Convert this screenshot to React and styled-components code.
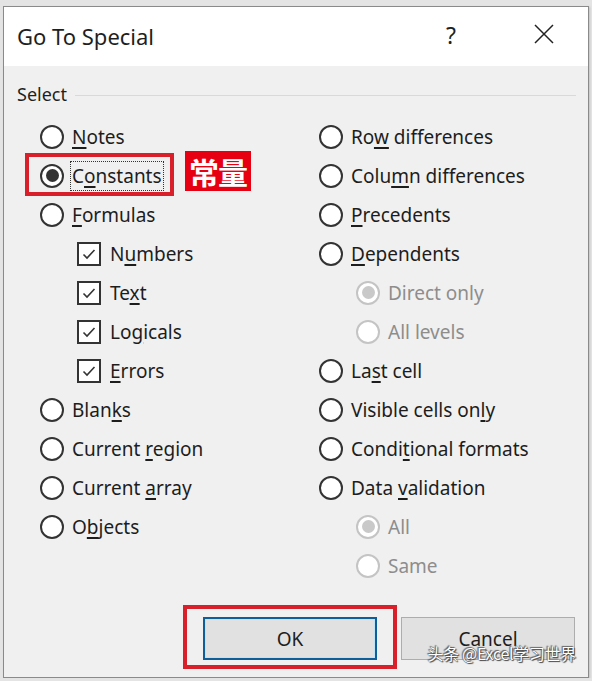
import React from 'react';
import styled, { createGlobalStyle } from 'styled-components';

const GlobalStyle = createGlobalStyle`
  html, body {
    margin: 0;
    padding: 0;
    background: #e4e4e4;
  }
  body {
    font-family: "Noto Sans", "Open Sans", sans-serif;
  }
`;

const Dialog = styled.div`
  position: relative;
  box-sizing: border-box;
  width: 586px;
  height: 672px;
  margin: 6px 0 0 3px;
  border: 1px solid #8a8a8a;
  background: #f0f0f0;
  display: flex;
  flex-direction: column;
  box-shadow: 1px 1px 2px rgba(0, 0, 0, 0.15);
`;

const TitleBar = styled.div`
  height: 59px;
  background: #fff;
  display: flex;
  align-items: center;
  padding: 0 0 0 13px;
  color: #1f1f1f;
`;

const Title = styled.div`
  flex: 1;
  font-size: 22px;
  padding-bottom: 2px;
`;

const Help = styled.div`
  font-size: 23px;
  width: 20px;
  margin-right: 68px;
  padding-bottom: 4px;
`;

const Close = styled.div`
  width: 20px;
  height: 20px;
  margin-right: 34px;
  margin-bottom: 6px;
  display: flex;
`;

const Body = styled.div`
  flex: 1;
  display: flex;
  flex-direction: column;
  padding: 15px 12px 0 13px;
`;

const GroupHead = styled.div`
  display: flex;
  align-items: center;
  gap: 8px;
  height: 26px;
  font-size: 18px;
  color: #1f1f1f;
  &::after {
    content: '';
    flex: 1;
    height: 1px;
    background: #d9d9d9;
    margin-top: 2px;
  }
`;

const Columns = styled.div`
  display: grid;
  grid-template-columns: 279px 1fr;
  padding: 10px 0 0 23px;
`;

const Column = styled.div`
  display: flex;
  flex-direction: column;
`;

const Row = styled.div`
  position: relative;
  height: 39px;
  display: flex;
  align-items: center;
  padding-left: ${(p) => (p.$indent ? '37px' : '0')};
  font-size: 19px;
  color: ${(p) => (p.$disabled ? '#8d8d8d' : '#1d1d1d')};
`;

const RadioCircle = styled.span`
  box-sizing: border-box;
  width: 24px;
  height: 24px;
  border-radius: 50%;
  border: 2px solid ${(p) => (p.$disabled ? '#c4c4c4' : '#333')};
  background: #fff;
  margin-right: 6px;
  display: flex;
  align-items: center;
  justify-content: center;
  flex-shrink: 0;
  &::after {
    content: '';
    display: ${(p) => (p.$checked ? 'block' : 'none')};
    width: 13px;
    height: 13px;
    border-radius: 50%;
    background: ${(p) => (p.$disabled ? '#c9c9c9' : '#333')};
  }
`;

const CheckBox = styled.span`
  box-sizing: border-box;
  width: 24px;
  height: 24px;
  border: 2px solid #333;
  background: #fff;
  margin-right: 7px;
  display: flex;
  align-items: center;
  justify-content: center;
  flex-shrink: 0;
`;

const Label = styled.span`
  position: relative;
  padding: 0 1px;
  border: 1px ${(p) => (p.$focus ? 'dotted #333' : 'solid transparent')};
  line-height: 28px;
`;

const Key = styled.span`
  text-decoration: underline;
  text-underline-offset: 3px;
  text-decoration-thickness: 1.5px;
`;

const Highlight = styled.div`
  position: absolute;
  left: -15px;
  top: -3px;
  width: 149px;
  height: 43px;
  box-sizing: border-box;
  border: 4px solid #d9202a;
  pointer-events: none;
`;

const Badge = styled.div`
  position: absolute;
  left: 145px;
  top: -5px;
  width: 66px;
  height: 40px;
  background: #e60012;
  color: #fff;
  font-family: "Noto Sans CJK SC", sans-serif;
  font-weight: 700;
  font-size: 30px;
  line-height: 40px;
  text-align: center;
  letter-spacing: -1px;
`;

const Buttons = styled.div`
  margin-top: auto;
  display: flex;
  justify-content: flex-end;
  align-items: flex-start;
  gap: 4px;
  padding: 0 1px 8px 0;
`;

const OkFrame = styled.div`
  border: 4px solid #d9202a;
  padding: 8px 16px 5px;
`;

const Button = styled.button`
  box-sizing: border-box;
  width: 174px;
  height: 43px;
  font-family: "Noto Sans", sans-serif;
  font-size: 19px;
  color: #1d1d1d;
  background: #e1e1e1;
  border: ${(p) => (p.$primary ? '2px solid #0f5e9c' : '1px solid #adadad')};
  box-shadow: ${(p) => (p.$primary ? 'inset 0 0 0 1px #bfe3f7' : 'none')};
  margin-top: ${(p) => (p.$primary ? '0' : '12px')};
  padding: 0;
`;

const Watermark = styled.div`
  position: absolute;
  right: 12px;
  bottom: 12px;
  font-family: "Noto Sans CJK SC", sans-serif;
  font-size: 16px;
  color: #fff;
  text-shadow: 0 0 1px #333, 1px 1px 1px #444, -1px -1px 1px #666;
  letter-spacing: -0.3px;
`;

const CloseIcon = () => (
  <svg width="20" height="20" viewBox="0 0 20 20">
    <path d="M1 1 L19 19 M19 1 L1 19" stroke="#222" strokeWidth="1.5" fill="none" />
  </svg>
);

const CheckMark = () => (
  <svg width="16" height="16" viewBox="0 0 16 16">
    <path d="M2.5 8.5 L6 12 L13.5 4" stroke="#333" strokeWidth="1.6" fill="none" />
  </svg>
);

// label text with the access-key letter underlined
const Text = ({ label, k }) => {
  if (k == null) return label;
  return (
    <>
      {label.slice(0, k)}
      <Key>{label[k]}</Key>
      {label.slice(k + 1)}
    </>
  );
};

const Radio = ({ label, k, checked, disabled, indent, focus, children }) => (
  <Row $disabled={disabled} $indent={indent}>
    {children}
    <RadioCircle $checked={checked} $disabled={disabled} />
    <Label $focus={focus}>
      <Text label={label} k={k} />
    </Label>
  </Row>
);

const Check = ({ label, k }) => (
  <Row $indent>
    <CheckBox>
      <CheckMark />
    </CheckBox>
    <Label>
      <Text label={label} k={k} />
    </Label>
  </Row>
);

export default function App() {
  return (
    <>
      <GlobalStyle />
      <Dialog>
        <TitleBar>
          <Title>Go To Special</Title>
          <Help>?</Help>
          <Close>
            <CloseIcon />
          </Close>
        </TitleBar>
        <Body>
          <GroupHead>Select</GroupHead>
          <Columns>
            <Column>
              <Radio label="Notes" k={0} />
              <Radio label="Constants" k={1} checked focus>
                <Highlight />
                <Badge>常量</Badge>
              </Radio>
              <Radio label="Formulas" k={0} />
              <Check label="Numbers" k={1} />
              <Check label="Text" k={2} />
              <Check label="Logicals" k={2} />
              <Check label="Errors" k={0} />
              <Radio label="Blanks" k={4} />
              <Radio label="Current region" k={8} />
              <Radio label="Current array" k={8} />
              <Radio label="Objects" k={1} />
            </Column>
            <Column>
              <Radio label="Row differences" k={2} />
              <Radio label="Column differences" k={4} />
              <Radio label="Precedents" k={0} />
              <Radio label="Dependents" k={0} />
              <Radio label="Direct only" indent disabled checked />
              <Radio label="All levels" indent disabled />
              <Radio label="Last cell" k={2} />
              <Radio label="Visible cells only" k={16} />
              <Radio label="Conditional formats" k={5} />
              <Radio label="Data validation" k={5} />
              <Radio label="All" indent disabled checked />
              <Radio label="Same" indent disabled />
            </Column>
          </Columns>
          <Buttons>
            <OkFrame>
              <Button $primary>OK</Button>
            </OkFrame>
            <Button>Cancel</Button>
          </Buttons>
        </Body>
        <Watermark>头条 @Excel学习世界</Watermark>
      </Dialog>
    </>
  );
}
